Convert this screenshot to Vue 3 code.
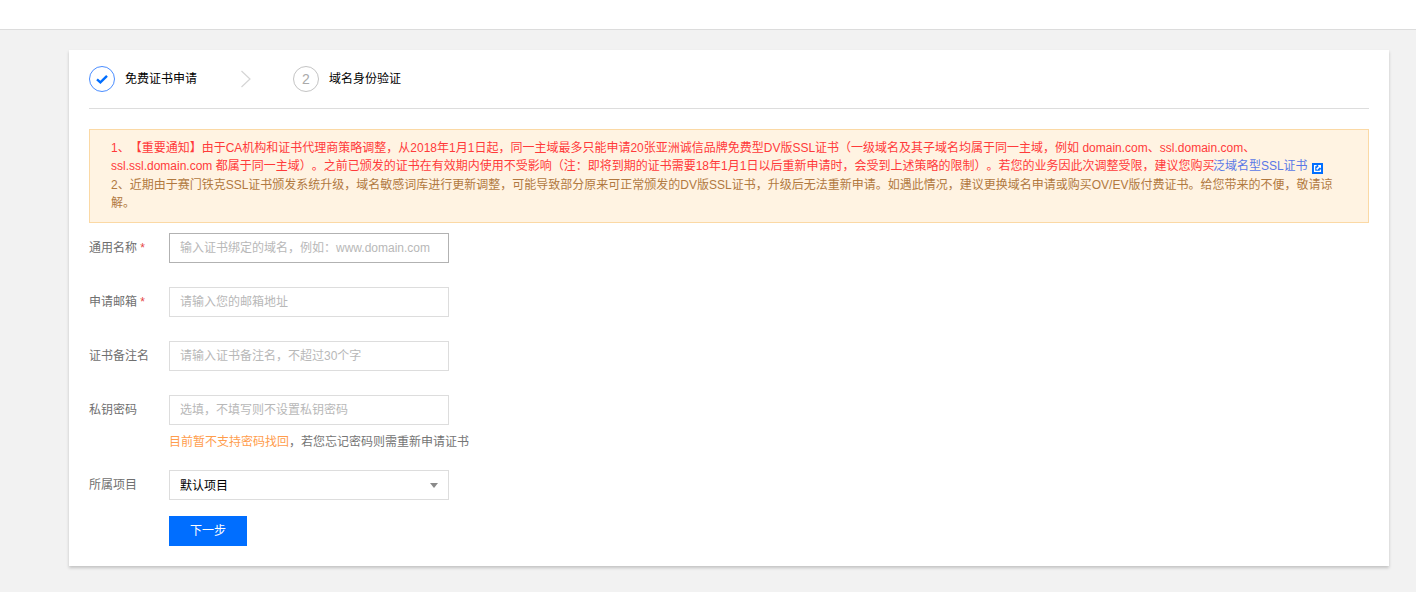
<script setup>
const fields = [
  { label: '通用名称', required: true, placeholder: '输入证书绑定的域名，例如：www.domain.com', focus: true },
  { label: '申请邮箱', required: true, placeholder: '请输入您的邮箱地址' },
  { label: '证书备注名', placeholder: '请输入证书备注名，不超过30个字' },
  { label: '私钥密码', placeholder: '选填，不填写则不设置私钥密码' },
]
</script>

<template>
  <div class="page">
    <header class="topbar"></header>
    <main class="card">
      <div class="steps">
        <div class="step">
          <span class="circle done">
            <svg width="14" height="12" viewBox="0 0 14 12"><path d="M2 6.4 5.4 9.4 12 2.8" fill="none" stroke="#006eff" stroke-width="2.4"/></svg>
          </span>
          <span class="step-name">免费证书申请</span>
        </div>
        <svg class="chev" width="12" height="18" viewBox="0 0 12 18"><path d="M1.5 1 10 9 1.5 17" fill="none" stroke="#d5d5d5" stroke-width="1.2"/></svg>
        <div class="step">
          <span class="circle">2</span>
          <span class="step-name">域名身份验证</span>
        </div>
      </div>

      <div class="notice">
        <p class="red">1、【重要通知】由于CA机构和证书代理商策略调整，从2018年1月1日起，同一主域最多只能申请20张亚洲诚信品牌免费型DV版SSL证书（一级域名及其子域名均属于同一主域，例如 domain.com、ssl.domain.com、<br>ssl.ssl.domain.com 都属于同一主域）。之前已颁发的证书在有效期内使用不受影响（注：即将到期的证书需要18年1月1日以后重新申请时，会受到上述策略的限制）。若您的业务因此次调整受限，建议您购买<a class="link">泛域名型SSL证书</a><svg class="ext" width="11" height="11" viewBox="0 0 11 11"><rect width="11" height="11" fill="#006eff"/><path d="M4.6 2.6H2.6V8.4H8.4V6.4" fill="none" stroke="#fff" stroke-width="1.3"/><path d="M4.6 6.4 8 3" fill="none" stroke="#fff" stroke-width="1.6"/><path d="M5.6 2H9V5.4Z" fill="#fff"/></svg></p>
        <p class="brown">2、近期由于赛门铁克SSL证书颁发系统升级，域名敏感词库进行更新调整，可能导致部分原来可正常颁发的DV版SSL证书，升级后无法重新申请。如遇此情况，建议更换域名申请或购买OV/EV版付费证书。给您带来的不便，敬请谅解。</p>
      </div>

      <form class="form" @submit.prevent>
        <div v-for="f in fields" :key="f.label" class="row">
          <label class="label">{{ f.label }}<i v-if="f.required" class="req"> *</i></label>
          <input class="input" :class="{ focus: f.focus }" :placeholder="f.placeholder" />
        </div>
        <p class="hint"><span class="orange">目前暂不支持密码找回</span>，若您忘记密码则需重新申请证书</p>
        <div class="row">
          <label class="label">所属项目</label>
          <div class="select">默认项目<span class="caret"></span></div>
        </div>
        <button class="next" type="button">下一步</button>
      </form>
    </main>
  </div>
</template>

<style>
html, body { margin: 0; background: #f2f2f2; }
</style>

<style scoped>
.page {
  height: 592px;
  overflow: hidden;
  background: #f2f2f2;
  font: 12px/18px "Liberation Sans", "Noto Sans CJK SC", sans-serif;
  text-spacing-trim: space-all;
  color: #000;
}
.topbar {
  height: 29px;
  background: #fff;
  border-bottom: 1px solid #dcdcdc;
}
.card {
  width: 1280px;
  margin: 20px 0 0 69px;
  padding: 16px 20px 20px;
  background: #fff;
  box-shadow: 0 2px 3px rgba(0, 0, 0, .2);
}
.steps {
  display: flex;
  align-items: center;
  height: 26px;
  padding-bottom: 16px;
  border-bottom: 1px solid #dddddd;
}
.step { display: flex; align-items: center; gap: 10px; }
.circle {
  width: 24px;
  height: 24px;
  border: 1px solid #c4c4c4;
  border-radius: 50%;
  display: flex;
  align-items: center;
  justify-content: center;
  color: #aaa;
  font-size: 14px;
}
.circle.done { border-color: #4a8dff; }
.step-name { color: #000; }
.chev { margin: 0 41px 0 43px; }
.notice {
  margin-top: 20px;
  padding: 9px 20px 10px 21px;
  height: 73px;
  background: #fff3e2;
  border: 1px solid #fbd9a5;
}
.notice p { margin: 0; line-height: 18.4px; }
.red { color: #ff3a3a; }
.brown { color: #b1793f; }
.link { color: #5a78e6; margin-left: -1.5px; }
.ext { margin-left: 4px; vertical-align: -4px; }
.form { display: flex; flex-direction: column; margin-top: 10px; }
.row { display: flex; align-items: center; height: 30px; margin-bottom: 24px; }
.label { width: 80px; color: #6f6f6f; margin-top: -1px; }
.req { color: #e54545; font-style: normal; }
.input {
  box-sizing: border-box;
  width: 280px;
  height: 30px;
  padding: 0 10px;
  border: 1px solid #ddd;
  outline: none;
  background: #fff;
  font: inherit;
  text-spacing-trim: space-all;
  color: #000;
}
.input::placeholder { color: #b8b8b8; opacity: 1; }
.input.focus { border-color: #b2b2b2; }
.hint {
  margin: -16px 0 19px 80px;
  height: 18px;
  color: #757575;
}
.orange { color: #ff9d4d; }
.select {
  box-sizing: border-box;
  position: relative;
  width: 280px;
  height: 30px;
  line-height: 30px;
  padding-left: 10px;
  border: 1px solid #ddd;
  color: #000;
}
.caret {
  position: absolute;
  right: 10px;
  top: 12px;
  border: 4.5px solid transparent;
  border-top: 5px solid #8a8a8a;
  border-bottom: 0;
}
.next {
  width: 78px;
  height: 30px;
  margin: -8px 0 0 80px;
  border: 0;
  padding: 0;
  background: #006eff;
  color: #fff;
  font: inherit;
}
</style>
